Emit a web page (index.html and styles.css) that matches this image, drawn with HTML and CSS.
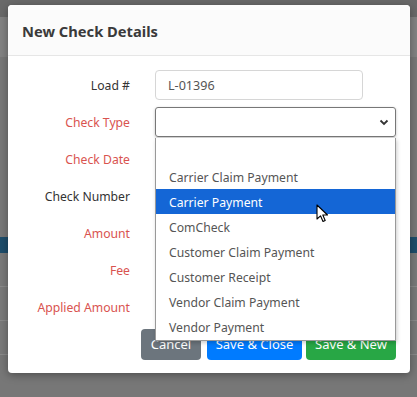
FILE: index.html
```html
<!DOCTYPE html>
<html>
<head lang="en">
    <meta charset="UTF-8">
    <title>New Check Details</title>
    <link rel="stylesheet" href="styles.css">
</head>
<body>
<!-- page behind the dialog -->
<div class="page">
    <div class="bandTop"></div>
    <div class="bandHead"></div>
    <div class="bandMid"></div>
    <div class="bandBlue"></div>
    <div class="bandRow"></div>
    <div class="bandRow"></div>
    <div class="bandRow"></div>
</div>

<div class="modal">
    <div class="modalHead">New Check Details</div>
    <div class="modalBody">
        <div class="row">
            <label class="lbl">Load #</label>
            <input class="field short" type="text" value="L-01396">
        </div>
        <div class="row">
            <label class="lbl req">Check Type</label>
            <div class="select">
                <svg width="10" height="7" viewBox="0 0 10 7"><path d="M1.5 1.5 L5 5 L8.5 1.5" fill="none" stroke="#333" stroke-width="1.8"/></svg>
            </div>
        </div>
        <div class="row">
            <label class="lbl req">Check Date</label>
            <input class="field" type="text">
        </div>
        <div class="row">
            <label class="lbl">Check Number</label>
            <input class="field" type="text">
        </div>
        <div class="row">
            <label class="lbl req">Amount</label>
            <input class="field" type="text">
        </div>
        <div class="row">
            <label class="lbl req">Fee</label>
            <input class="field" type="text">
        </div>
        <div class="row">
            <label class="lbl req">Applied Amount</label>
            <input class="field" type="text">
        </div>
        <div class="btns">
            <button class="btn gray">Cancel</button>
            <button class="btn blue">Save &amp; Close</button>
            <button class="btn green">Save &amp; New</button>
        </div>

        <!-- open list of the Check Type select -->
        <ul class="options">
            <li></li>
            <li>Carrier Claim Payment</li>
            <li class="on">Carrier Payment</li>
            <li>ComCheck</li>
            <li>Customer Claim Payment</li>
            <li>Customer Receipt</li>
            <li>Vendor Claim Payment</li>
            <li>Vendor Payment</li>
        </ul>
    </div>
</div>

<!-- mouse pointer -->
<svg class="cursor" width="14" height="20" viewBox="0 0 14 20">
    <path d="M1 1 L1 15 L4.5 11.8 L7 17.5 L9.2 16.5 L6.8 11 L11.5 11 Z" fill="#fff" stroke="#000" stroke-width="1.1" stroke-linejoin="round"/>
</svg>
</body>
</html>
```

FILE: styles.css
```css
*{box-sizing:border-box;}
body{
    margin:0;width:417px;height:397px;overflow:hidden;
    font-family:"Noto Sans","Open Sans",sans-serif;font-size:12.2px;color:#333;
    background:#777;position:relative;
}
.page{display:flex;flex-direction:column;}
.bandTop{height:17px;background:#696969;}
.bandHead{height:40px;background:#828282;}
.bandMid{height:180px;background:#787878;}
.bandBlue{height:16px;background:#1e4d6b;}
.bandRow{height:34px;background:#7a7a7a;border-bottom:1px solid #8a8a8a;}

.modal{
    position:absolute;top:5px;left:8px;width:402px;height:368px;
    background:#fff;border-radius:4px;
    box-shadow:0 2px 8px rgba(0,0,0,.35);
}
.modalHead{
    height:51px;padding:16px 0 0 14px;
    font-size:14.7px;font-weight:bold;color:#3a3a3a;
    background:#fbfbfb;border-bottom:1px solid #e6e6e6;
    border-radius:4px 4px 0 0;
}
.modalBody{
    position:relative;padding:14px 14px 0 0;
    display:flex;flex-direction:column;gap:7px;
}
.row{display:flex;align-items:center;height:30px;gap:25px;}
.lbl{width:122px;text-align:right;color:#333;}
.lbl.req{color:#d9534f;}
.field{
    width:241px;height:30px;border:1px solid #d6d6d6;border-radius:4px;
    padding:0 12px;font:inherit;font-size:12.6px;color:#555;
}
.field.short{width:208px;}
.select{
    width:241px;height:30px;border:1px solid #777;border-radius:3px;
    box-shadow:0 1px 3px rgba(0,0,0,.25);
    display:flex;align-items:center;justify-content:flex-end;padding-right:6px;
}
.btns{display:flex;justify-content:flex-end;gap:6px;}
.btns .btn{
    height:31px;border:none;border-radius:4px;color:#fff;white-space:nowrap;
    font:inherit;font-size:13px;padding:0 4px 2px;
}
.btn.gray{background:#6c757d;width:60px;}
.btn.blue{background:#007bff;width:95px;margin-right:-2px;}
.btn.green{background:#28a745;width:90px;}

.options{
    position:absolute;left:147px;top:82px;width:241px;
    margin:0;padding:0 0 1px;list-style:none;background:#fff;
    border:1px solid #999;border-top:none;
    box-shadow:1px 2px 4px rgba(0,0,0,.2);
}
.options li{height:25px;line-height:27px;padding-left:13px;color:#555;}
.options li:first-child{height:26px;}
.options li.on{background:#1466d6;color:#fff;}

.cursor{position:absolute;left:316px;top:204px;}
```
